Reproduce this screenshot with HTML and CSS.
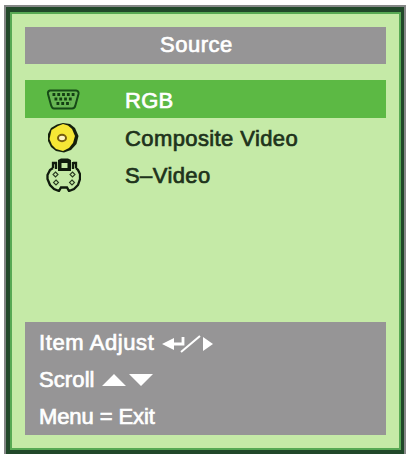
FILE: index.html
```html
<!DOCTYPE html>
<html lang="en">
<head>
<meta charset="utf-8">
<title>Source</title>
<link rel="stylesheet" href="styles.css">
</head>
<body>
<main class="frame">
  <div class="rim">
    <div class="panel">
      <header class="title">Source</header>
      <ul class="sources">
        <li class="source selected">
          <svg class="icon" width="36" height="36" viewBox="0 0 36 36">
            <path d="M5 9.500H31Q34 10 33.500 13L30.500 24Q29.800 27.500 27 27.500H9Q7 27.500 6 24L3 13Q2.500 10 5 9.500Z" fill="#67b653" stroke="#174a17" stroke-width="2"/>
            <path d="M7.500 13.500H30M9.500 18H28M11.500 22.500H26" stroke="#123d12" stroke-width="3" stroke-dasharray="2.800 2"/>
          </svg>
          <span class="label rgb">RGB</span>
        </li>
        <li class="source">
          <svg class="icon" width="36" height="36" viewBox="0 0 36 36">
            <path d="M12 5.500L18 4L25 5L30 9L33.500 17L31.500 25L26 31L19 33.500L11 32L6 28L3 22V15L6 9Z" fill="#15200c"/>
            <path d="M13 7L18 5L23 6.500L27 10L30 17L28 24L24 29L18 32L11 30L7 26L4.500 20L6.500 11Z" fill="#f6e735"/>
            <ellipse cx="17" cy="19" rx="4" ry="3.200" fill="#fff5c4" stroke="#765d10" stroke-width="2"/>
          </svg>
          <span class="label composite">Composite Video</span>
        </li>
        <li class="source">
          <svg class="icon" width="36" height="36" viewBox="0 0 36 36">
            <path d="M8 12V7H12M28 7H31V12M8 12L5 14L2.500 19V23L5 29L9 33L14 35L16 31.500H22L24 35L29 33L33 29L35 23V18L33 14L31 12" fill="none" stroke="#101b0d" stroke-width="2.300"/>
            <path d="M13 4L16 2.500H23L26 4V15H13Z" fill="#101b0d"/>
            <path d="M16.500 7H22.500V12H16.500Z" fill="#c7eaa7"/>
            <path d="M11 6V13M28 6V13" stroke="#101b0d" stroke-width="2.300"/>
            <path d="M10.500 16L13 18.500L10.500 21L8 18.500ZM27.500 16L30 18.500L27.500 21L25 18.500ZM11 24L13.500 26.500L11 29L8.500 26.500ZM27 24L29.500 26.500L27 29L24.500 26.500Z" fill="none" stroke="#293b20" stroke-width="1.100"/>
          </svg>
          <span class="label svideo">S–Video</span>
        </li>
      </ul>
      <footer class="help">
        <div class="hint"><span class="adjust">Item Adjust</span>
          <svg class="keys" width="52" height="22" viewBox="0 0 52 22">
            <path d="M0 12L12 6V18Z" fill="#fff"/>
            <path d="M11 12H21V5" fill="none" stroke="#fff" stroke-width="2.800"/>
            <path d="M19 20L38 4" stroke="#fff" stroke-width="2"/>
            <path d="M41 5L51 12L41 19Z" fill="#fff"/>
          </svg>
        </div>
        <div class="hint"><span class="scroll">Scroll</span>
          <svg class="arrows" width="52" height="22" viewBox="0 0 52 22">
            <path d="M0 17L12 5L24 17ZM27 5H51L39 17Z" fill="#fff"/>
          </svg>
        </div>
        <div class="hint"><span class="exit">Menu = Exit</span></div>
      </footer>
    </div>
  </div>
</main>
</body>
</html>
```
FILE: styles.css
```css
* { box-sizing: border-box; }
body {
  margin: 0;
  width: 406px;
  height: 454px;
  padding: 5px 0 0 4px;
  overflow: hidden;
  background: #fff;
  font: 22px/24px "Liberation Sans", sans-serif;
}
.frame {
  height: 449px;
  border: 2px solid #858787;
  border-bottom: 0;
}
.rim {
  height: 447px;
  border: solid #21482a;
  border-width: 5px 3px 4px 4px;
}
.panel {
  display: flex;
  flex-direction: column;
  height: 438px;
  padding: 13px;
  border: 2px solid #57a954;
  background: #c5eaa7;
}
.title {
  height: 37px;
  padding: 6px 0 0 135px;
  background: #969596;
  color: #fff;
  letter-spacing: .5px;
  -webkit-text-stroke: .7px;
}
.sources {
  margin: 16px 0 0;
  padding: 0;
  list-style: none;
}
.source {
  display: flex;
  align-items: center;
  height: 37px;
  padding-left: 20px;
  color: #20331b;
}
.selected {
  height: 38px;
  background: #5cb944;
  color: #fff;
}
.icon { flex: none; }
.label {
  margin-left: 44px;
  padding-top: 4px;
  -webkit-text-stroke: .7px;
  white-space: nowrap;
}
.rgb { letter-spacing: .3px; }
.composite { letter-spacing: .4px; }
.svideo { letter-spacing: .4px; }
.help {
  height: 113px;
  margin-top: auto;
  padding: 2px 0 0 14px;
  background: #969596;
  color: #fff;
  -webkit-text-stroke: .7px;
}
.hint {
  display: flex;
  align-items: center;
  height: 37px;
}
.keys, .arrows { flex: none; }
.adjust { width: 116px; letter-spacing: .6px; white-space: nowrap; }
.scroll { width: 57px; letter-spacing: .1px; }
.exit { letter-spacing: -.1px; }
.keys { margin-left: 7px; }
.arrows { margin-left: 6px; }
```
